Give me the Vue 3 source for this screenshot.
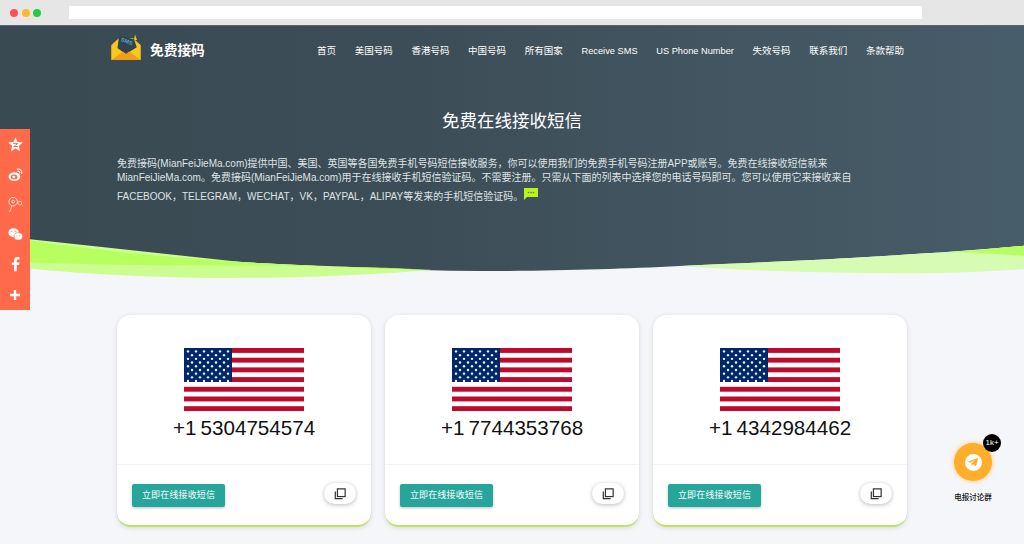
<script setup>
const navItems = ['首页', '美国号码', '香港号码', '中国号码', '所有国家', 'Receive SMS', 'US Phone Number', '失效号码', '联系我们', '条款帮助']
const numbers = ['+1 5304754574', '+1 7744353768', '+1 4342984462']

const isLatin = (s) => /^[A-Za-z ]+$/.test(s)

// 9 rows of stars, 6 and 5 alternating
const stars = []
for (let row = 0; row < 9; row++) {
  const n = row % 2 ? 5 : 6
  for (let i = 0; i < n; i++) {
    stars.push({ x: (row % 2 ? 4 : 2) + i * 4, y: 1.8 + row * 1.95 })
  }
}
</script>

<template>
  <div class="page">
    <div class="chrome">
      <span class="dot red"></span>
      <span class="dot yellow"></span>
      <span class="dot green"></span>
      <div class="url"></div>
    </div>

    <section class="hero">
      <header class="nav">
        <div class="brand">
          <svg class="logo" viewBox="0 0 30 27" width="30" height="27">
            <path d="M.5 11 L8 4 L22 4 L29.5 11 L29.5 26 L.5 26 Z" fill="#f5c51f" />
            <path d="M23 6 L24 .5 L26 6 Z" fill="#f5c51f" />
            <path d="M8 2 L23 5 L26 14 L15 21 L6.5 14 Z" fill="#33424c" />
            <text x="9.5" y="9" class="sms" transform="rotate(20 15 8)">SMS</text>
            <path d="M.5 11 L15 20 L29.5 11 L29.5 26 L.5 26 Z" fill="#fac81f" />
            <path d="M.5 26 L12 17.5 L15 20 L18 17.5 L29.5 26 Z" fill="#f09d17" />
          </svg>
          <span class="brand-name">免费接码</span>
        </div>
        <nav class="menu">
          <a v-for="item in navItems" :key="item" :class="{ latin: isLatin(item) }">{{ item }}</a>
        </nav>
      </header>

      <h1>免费在线接收短信</h1>
      <p class="intro">
        免费接码(MianFeiJieMa.com)提供中国、美国、英国等各国免费手机号码短信接收服务，你可以使用我们的免费手机号码注册APP或账号。免费在线接收短信就来<br>
        MianFeiJieMa.com。免费接码(MianFeiJieMa.com)用于在线接收手机短信验证码。不需要注册。只需从下面的列表中选择您的电话号码即可。您可以使用它来接收来自<br>
        FACEBOOK，TELEGRAM，WECHAT，VK，PAYPAL，ALIPAY等发来的手机短信验证码。<svg class="bubble" viewBox="0 0 14 14" width="14" height="14">
          <path d="M0 1 H14 V10 H3 L0 13 Z" fill="#b9f21c" />
          <circle cx="4.5" cy="5.5" r=".8" fill="#5c7a20" />
          <circle cx="7" cy="5.5" r=".8" fill="#5c7a20" />
          <circle cx="9.5" cy="5.5" r=".8" fill="#5c7a20" />
        </svg>
      </p>

      <svg class="wave" viewBox="0 0 1024 50" width="1024" height="50">
        <path d="M0 -5 C80 8 180 18 261 22 C330 26 400 29.5 480 30 C560 30 620 28 680 25 C740 22 800 20 850 17 C920 13 980 9 1024 4.7 V50 H0 Z" fill="#f5f6f9" />
        <path d="M0 24 C60 32 150 37 229 37 C310 37 380 33 432 29 L250 22 L0 -5 Z" fill="#cbfd90" />
        <path d="M0 -5 C80 8 180 18 261 22 C330 26 385 28 432 29 C400 27 360 25.5 261 24.7 C180 24.7 80 24 0 20 Z" fill="#b6ff5f" />
        <path d="M680 25 C740 22 800 20 850 17 C920 13 980 9 1024 4.7 V28 C980 31 930 33 882 32 C820 31.5 750 30 680 25 Z" fill="#d6fbb2" />
        <path d="M948 11.3 C975 9.5 1000 7 1024 4.7 V15 C1000 13 975 11.5 948 11.3 Z" fill="#b6ff5f" />
      </svg>
    </section>

    <main class="cards">
      <article v-for="num in numbers" :key="num" class="card">
        <div class="card-body">
          <svg class="flag" viewBox="0 0 120 63" width="120" height="63">
            <rect width="120" height="63" fill="#fff" />
            <rect v-for="n in 7" :key="n" x="0" :y="(n - 1) * 9.7" width="120" height="4.9" fill="#bf0a30" />
            <rect width="48" height="33.9" fill="#002868" />
            <circle v-for="(s, i) in stars" :key="i" :cx="s.x * 2" :cy="s.y * 1.9" r="1.2" fill="#f2f5fa" />
          </svg>
          <div class="number">{{ num }}</div>
        </div>
        <div class="card-foot">
          <a class="btn">立即在线接收短信</a>
          <a class="copy">
            <svg viewBox="0 0 14 14" width="12" height="12" fill="none" stroke="#333" stroke-width="1.4">
              <rect x="4" y="1" width="9" height="9" />
              <path d="M1.5 4 V12.5 H10" />
            </svg>
          </a>
        </div>
      </article>
    </main>

    <aside class="share">
      <a>
        <svg viewBox="0 0 16 16" width="15" height="15">
          <path d="M8 .4 L10.2 5.4 L15.8 5.9 L11.5 9.5 L12.9 15.2 L8 12.2 L3.1 15.2 L4.5 9.5 L.2 5.9 L5.8 5.4 Z" fill="#fff" />
          <path d="M5.4 6.8 H10.6 L6 10.2 H10.6" fill="none" stroke="#ff6b4a" stroke-width="1" />
        </svg>
      </a>
      <a>
        <svg viewBox="0 0 16 16" width="15" height="15" fill="none">
          <ellipse cx="6.8" cy="10.3" rx="6.2" ry="4.6" fill="#fff" />
          <ellipse cx="6.5" cy="10.6" rx="3.6" ry="2.7" fill="#ff6b4a" />
          <circle cx="6.2" cy="10.7" r="1.5" fill="#fff" />
          <path d="M10 2.2 C13 1.6 15.2 4 14.6 7 M10.4 4.4 C11.8 4.1 12.8 5.2 12.4 6.6" stroke="#fff" stroke-width="1.1" stroke-linecap="round" />
        </svg>
      </a>
      <a class="faint">
        <svg viewBox="0 0 18 18" width="17" height="17" fill="none" stroke="#fff" stroke-width="1">
          <circle cx="6.5" cy="6" r="4.5" />
          <circle cx="6.5" cy="6" r="1.4" />
          <path d="M5 10 C4.6 13 3.6 15.5 2.6 17" />
          <circle cx="13.5" cy="7.5" r="2" stroke-width=".7" />
          <path d="M15 9 L17 11" stroke-width=".7" />
        </svg>
      </a>
      <a>
        <svg viewBox="0 0 16 16" width="15" height="15">
          <ellipse cx="6" cy="6" rx="5.6" ry="4.8" fill="#fff" />
          <ellipse cx="11" cy="10" rx="4.6" ry="3.9" fill="#fff" stroke="#ff6b4a" stroke-width=".7" />
          <circle cx="4.2" cy="4.6" r=".7" fill="#ff6b4a" />
          <circle cx="7.6" cy="4.6" r=".7" fill="#ff6b4a" />
          <circle cx="9.5" cy="9.4" r=".5" fill="#ff6b4a" />
          <circle cx="12.5" cy="9.4" r=".5" fill="#ff6b4a" />
        </svg>
      </a>
      <a>
        <svg viewBox="0 0 10 16" width="9" height="16">
          <path d="M6.4 16 V9 H9 L9.4 6.2 H6.4 V4.4 C6.4 3.5 6.8 3 7.9 3 H9.5 V.4 C9 .3 8.2 .2 7.2 .2 C5 .2 3.4 1.5 3.4 4 V6.2 H.8 V9 H3.4 V16 Z" fill="#fff" />
        </svg>
      </a>
      <a>
        <svg viewBox="0 0 12 12" width="12" height="12">
          <path d="M4.8 1 H7.2 V4.8 H11 V7.2 H7.2 V11 H4.8 V7.2 H1 V4.8 H4.8 Z" fill="#fff" />
        </svg>
      </a>
    </aside>

    <div class="tg">
      <div class="tg-btn">
        <span class="tg-inner">
          <svg viewBox="0 0 14 14" width="12" height="12">
            <path d="M1 6.8 L13 2 L10.6 12 L7.4 9.6 L5.6 11.4 L5.2 8.4 L10.4 4.2 L4 7.9 Z" fill="#ffae2b" />
          </svg>
        </span>
        <span class="badge">1k+</span>
      </div>
      <div class="tg-label">电报讨论群</div>
    </div>
  </div>
</template>

<style>
html, body {
  margin: 0;
  overflow: hidden;
}
</style>

<style scoped>
.page {
  position: relative;
  width: 1024px;
  height: 544px;
  overflow: hidden;
  background: #f5f6f9;
  font-family: "Liberation Sans", "Noto Sans CJK SC", sans-serif;
}

/* browser bar */
.chrome {
  display: flex;
  align-items: center;
  box-sizing: border-box;
  height: 26px;
  padding-left: 10px;
  gap: 3.7px;
  background: #e6e6e6;
  border-bottom: 1px solid #59666e;
}
.dot {
  width: 8px;
  height: 8px;
  border-radius: 50%;
}
.red { background: #ff5257; }
.yellow { background: #fdb92d; }
.green { background: #29c941; }
.url {
  width: 853px;
  height: 13px;
  margin-left: 24px;
  background: #fff;
}

/* hero */
.hero {
  position: relative;
  box-sizing: border-box;
  height: 246px;
  padding: 0 117px;
  color: #fff;
  background: linear-gradient(90deg, #3a4a53 0%, #3d4d57 40%, #475d69 100%);
}
.nav {
  display: flex;
  align-items: center;
  justify-content: space-between;
  height: 49px;
  margin-left: -6px;
  padding-right: 3px;
}
.brand {
  display: flex;
  align-items: center;
  gap: 9px;
}
.logo {
  margin-top: -7px;
}
.sms {
  font-size: 5.5px;
  font-weight: 700;
  fill: #4ba3d8;
}
.brand-name {
  font-size: 13.7px;
  line-height: 20px;
  font-weight: 700;
}
.menu {
  display: flex;
  gap: 18.7px;
  font-size: 9.5px;
  line-height: 14px;
}
.menu .latin {
  font-size: 9.25px;
}
h1 {
  margin: 34px 0 0;
  font-size: 17.5px;
  font-weight: 400;
  line-height: 24px;
  text-align: center;
}
.intro {
  position: relative;
  z-index: 1;
  margin: 24px 0 0;
  font-size: 10px;
  line-height: 14px;
  color: #dfe3e6;
  white-space: nowrap;
}
.bubble {
  vertical-align: -1px;
  margin-top: 2px;
  margin-left: 1px;
}
.wave {
  position: absolute;
  left: 0;
  top: 215px;
  display: block;
  overflow: visible;
}

/* cards */
.cards {
  display: flex;
  gap: 14px;
  padding: 43px 0 0 117px;
}
.card {
  display: flex;
  flex-direction: column;
  box-sizing: border-box;
  width: 254px;
  height: 212px;
  background: #fff;
  border-radius: 14px;
  border-bottom: 2px solid #bee35c;
  box-shadow: 0 1px 5px rgba(0, 0, 0, 0.12);
}
.card-body {
  display: flex;
  flex-direction: column;
  align-items: center;
  height: 150px;
  padding-top: 33px;
  box-sizing: border-box;
  border-bottom: 1px solid #f2f3f5;
}
.flag {
  display: block;
}
.number {
  margin-top: 5px;
  font-size: 20.6px;
  line-height: 24px;
  word-spacing: -1.5px;
  color: #111;
}
.card-foot {
  display: flex;
  align-items: flex-start;
  justify-content: space-between;
  padding: 18px 15px 0;
}
.btn {
  width: 93px;
  height: 23px;
  margin-top: 1px;
  font-size: 9px;
  line-height: 23px;
  letter-spacing: 0.15px;
  text-align: center;
  color: #fff;
  background: #26a69a;
  border-radius: 2px;
  box-shadow: 0 1px 3px rgba(0, 0, 0, 0.25);
}
.copy {
  display: flex;
  align-items: center;
  justify-content: center;
  width: 32px;
  height: 21px;
  background: #fff;
  border-radius: 11px;
  box-shadow: 0 1px 4px rgba(0, 0, 0, 0.28);
}

/* floating share bar */
.share {
  position: absolute;
  left: 0;
  top: 129px;
  display: flex;
  flex-direction: column;
  width: 30px;
  height: 181px;
  background: #ff6b4a;
}
.share a {
  display: flex;
  align-items: center;
  justify-content: center;
  height: 30.1px;
}
.share .faint {
  opacity: 0.8;
}

/* telegram button */
.tg {
  position: absolute;
  left: 948px;
  top: 443px;
  width: 50px;
  display: flex;
  flex-direction: column;
  align-items: center;
}
.tg-btn {
  position: relative;
  display: flex;
  align-items: center;
  justify-content: center;
  width: 38px;
  height: 38px;
  background: #ffae2b;
  border-radius: 50%;
  box-shadow: 0 0 4px rgba(255, 174, 43, 0.7);
}
.tg-inner {
  display: flex;
  align-items: center;
  justify-content: center;
  width: 17px;
  height: 17px;
  background: #fff;
  border-radius: 50%;
}
.badge {
  position: absolute;
  top: -9px;
  right: -9px;
  width: 18px;
  height: 18px;
  font-size: 8px;
  line-height: 18px;
  text-align: center;
  color: #fff;
  background: #000;
  border-radius: 50%;
}
.tg-label {
  margin-top: 11px;
  font-size: 7.5px;
  line-height: 12px;
  font-weight: 500;
  white-space: nowrap;
  color: #111;
}
</style>
